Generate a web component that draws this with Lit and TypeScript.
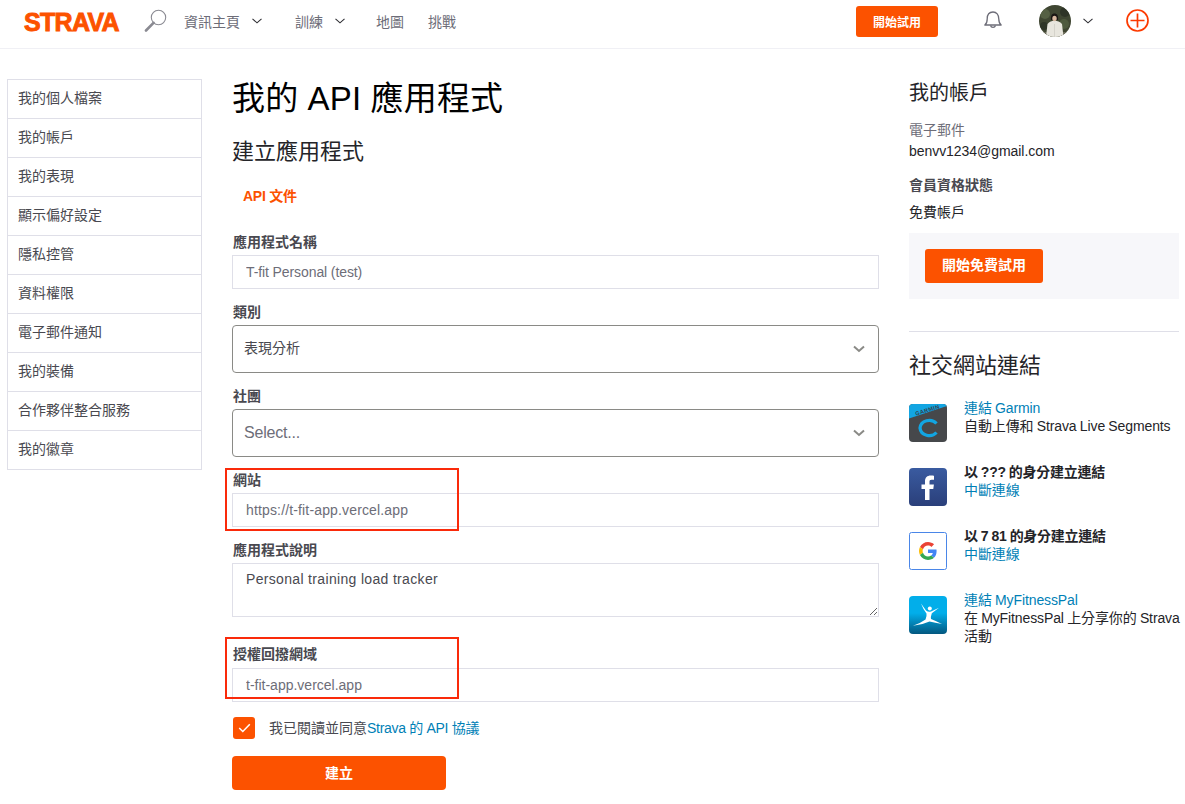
import { LitElement, html, css, svg } from 'lit';
import { customElement } from 'lit/decorators.js';

const chevron = svg`<path d="M.5 .8l4.500 4 4.500-4" fill="none" stroke="#2d2d32" stroke-width="1.100"/>`;

const menu = ['我的個人檔案', '我的帳戶', '我的表現', '顯示偏好設定', '隱私控管', '資料權限', '電子郵件通知', '我的裝備', '合作夥伴整合服務', '我的徽章'];

@customElement('app-root')
export class AppRoot extends LitElement {
  static styles = css`
    :host {
      display: block;
      width: 1185px;
      height: 804px;
      overflow: hidden;
      position: relative;
      background: #fff;
      font-family: "Liberation Sans", "Noto Sans CJK TC", sans-serif;
      font-size: 14px;
      color: #242428;
    }

    /* header */
    .top {
      display: flex;
      align-items: center;
      box-sizing: border-box;
      height: 49px;
      border-bottom: 1px solid #f0f0f5;
      padding: 0 0 7px 24px;
      color: #6d6d78;
    }
    .logo {
      width: 96px;
      font-family: "Liberation Sans", sans-serif;
      font-weight: 700;
      font-size: 25px;
      letter-spacing: -.7px;
      line-height: 20px;
      margin-top: 2px;
      color: #fc5200;
      -webkit-text-stroke: 0.9px #fc5200;
      white-space: nowrap;
    }
    .search { margin-left: 24px; }
    .nav { display: flex; align-items: center; white-space: nowrap; }
    .nav svg { margin-left: 12px; margin-top: 1px; }
    .n1 { margin-left: 17px; }
    .n2 { margin-left: 33px; }
    .n3 { margin-left: 31px; }
    .n4 { margin-left: 24px; }
    .trial {
      margin-left: 400px;
      width: 82px;
      height: 31px;
      margin-top: 2px;
      border-radius: 3px;
      background: #fc5200;
      color: #fff;
      font-size: 12px;
      font-weight: 700;
      display: flex;
      align-items: center;
      justify-content: center;
      padding-bottom: 1px;
      box-sizing: border-box;
    }
    .bell { margin-left: 46px; margin-top: -2px; }
    .avatar {
      margin-left: 37px;
      width: 32px;
      height: 32px;
      margin-top: 1px;
      display: block;
    }
    .avchev { margin-left: 12px; }
    .plus { margin-left: 33px; }

    /* page */
    .page {
      display: grid;
      grid-template-columns: 195px 647px 270px;
      column-gap: 30px;
      padding: 30px 0 0 7px;
    }

    .side { border: 1px solid #dfdfe8; border-bottom: 0; align-self: start; width: 193px; }
    .side div {
      height: 38px;
      line-height: 37px;
      padding-left: 10px;
      border-bottom: 1px solid #dfdfe8;
      color: #494950;
    }

    /* main column */
    h1 { margin: 0; font-size: 33px; font-weight: 400; line-height: 42px; color: #000; letter-spacing: .15px; }
    h2 { margin: 0; font-size: 22px; font-weight: 400; line-height: 30px; color: #242428; }
    .main h1 { margin-top: -1px; }
    .main h2 { margin-top: 17px; }
    .doc {
      margin: 19px 0 0 11px;
      color: #fc5200;
      font-weight: 700;
      line-height: 20px;
      letter-spacing: -.25px;
    }
    .lab {
      display: block;
      font-weight: 700;
      line-height: 20px;
      color: #494950;
      margin: 13px 0 3px 1px;
    }
    .main .first { margin-top: 26px; }
    .main .gapped { margin-top: 27px; margin-bottom: 4px; }
    input, textarea {
      display: block;
      box-sizing: border-box;
      width: 647px;
      margin: 0;
      font: inherit;
      color: #6d6d78;
      border: 1px solid #dfdfe8;
      border-radius: 0;
      outline: 0;
      padding: 0 13px;
      background: #fff;
    }
    input { height: 34px; }
    input.url { letter-spacing: .15px; }
    input.name { letter-spacing: -.1px; }
    textarea { height: 54px; padding: 7px 13px; color: #494950; letter-spacing: .33px; }
    .sel {
      box-sizing: border-box;
      height: 48px;
      border: 1px solid #8a8a86;
      border-radius: 4px;
      display: flex;
      align-items: center;
      justify-content: space-between;
      padding: 0 13px 0 11px;
      color: #494950;
    }
    .sel span { padding-bottom: 4px; }
    .sel.ph { font-size: 16px; color: #6d6d78; }
    .sel.ph span { padding-bottom: 0; letter-spacing: -.2px; }
    .agree { display: flex; align-items: center; margin-top: 15px; color: #494950; height: 22px; }
    .agree span { padding-bottom: 2px; }
    .box {
      width: 22px;
      height: 22px;
      margin-left: 1px;
      margin-right: 14px;
      border-radius: 3px;
      background: #fc5200;
      display: flex;
      align-items: center;
      justify-content: center;
    }
    a { color: #007fb6; text-decoration: none; }
    .agree a { letter-spacing: -.3px; }
    .create {
      margin-top: 17px;
      width: 214px;
      height: 34px;
      box-sizing: border-box;
      padding-bottom: 2px;
      border-radius: 4px;
      background: #fc5200;
      color: #fff;
      font-weight: 700;
      display: flex;
      align-items: center;
      justify-content: center;
    }

    /* right column */
    .right h3 { margin: 0; font-size: 20px; font-weight: 400; line-height: 28px; color: #242428; }
    .gray { color: #6d6d78; line-height: 20px; margin-top: 13px; }
    .line { line-height: 20px; margin-top: 1px; letter-spacing: -.05px; }
    .bold { font-weight: 700; color: #494950; line-height: 20px; margin-top: 14px; }
    .free { line-height: 20px; margin-top: 7px; }
    .panel { margin-top: 11px; background: #f7f7fa; padding: 16px; height: 66px; box-sizing: border-box; }
    .panel div {
      width: 118px;
      height: 34px;
      box-sizing: border-box;
      padding-bottom: 5px;
      border-radius: 3px;
      background: #fc5200;
      color: #fff;
      font-weight: 700;
      display: flex;
      align-items: center;
      justify-content: center;
    }
    hr { border: 0; border-top: 1px solid #dfdfe8; margin: 32px 0 0; }
    .right h2 { margin-top: 19px; }
    .socials { display: flex; flex-direction: column; gap: 28px; margin-top: 21px; }
    .soc { display: flex; gap: 17px; line-height: 18px; height: 36px; }
    .soc svg { flex: none; margin-top: 2px; }
    .soc b { color: #242428; letter-spacing: -.27px; }
    .soc .txt { margin-top: -3px; white-space: nowrap; word-spacing: -.5px; letter-spacing: -.11px; }

    /* annotation boxes */
    .mark {
      position: absolute;
      left: 225px;
      width: 230px;
      border: 2px solid #fa2a0a;
      pointer-events: none;
    }
    .m1 { top: 468px; height: 59px; }
    .m2 { top: 637px; height: 58px; }
  `;

  render() {
    return html`
      <div class="top">
        <div class="logo">STRAVA</div>
        <svg class="search" width="23" height="23" viewBox="0 0 23 23" fill="none">
          <circle cx="14.500" cy="8.500" r="7.200" stroke="#8a8a92" stroke-width="1.100"/>
          <path d="M9.500 13.800 2 21.500" stroke="#8a8a92" stroke-width="2.600" stroke-linecap="round"/>
        </svg>
        <div class="nav n1">資訊主頁<svg width="10" height="6" viewBox="0 0 10 6">${chevron}</svg></div>
        <div class="nav n2">訓練<svg width="10" height="6" viewBox="0 0 10 6">${chevron}</svg></div>
        <div class="nav n3">地圖</div>
        <div class="nav n4">挑戰</div>
        <div class="trial">開始試用</div>
        <svg class="bell" width="18" height="18" viewBox="0 0 18 18" fill="none" stroke="#6d6d78" stroke-width="1.300">
          <path d="M.8 14c1.800-1.200 2.400-2.600 2.400-6C3.200 3.600 5.500 1 9 1s5.800 2.600 5.800 7c0 3.400.6 4.800 2.400 6z" stroke-linejoin="round"/>
          <path d="M6.500 14.500a2.600 2.600 0 0 0 5 0"/>
        </svg>
        <svg class="avatar" viewBox="0 0 32 32">
          <defs><clipPath id="av"><circle cx="16" cy="16" r="16"/></clipPath></defs>
          <g clip-path="url(#av)">
            <rect width="32" height="32" fill="#3f4632"/>
            <circle cx="6" cy="9" r="5" fill="#556044"/>
            <circle cx="26" cy="7" r="5" fill="#2e3427"/>
            <circle cx="25" cy="19" r="5" fill="#4e5a3e"/>
            <circle cx="5" cy="21" r="4" fill="#2f3628"/>
            <rect y="27" width="32" height="5" fill="#6a6a58"/>
            <path d="M7 32l1.500-13c2-2.500 4-3 7-3s5.500.5 7.500 3L24.500 32z" fill="#e8e6de"/>
            <path d="M15.500 19v13" stroke="#c8c6be" stroke-width=".6"/>
            <path d="M12 15c-.5-4.500 1-6.500 3.500-6.500s4 2 3.500 6.500z" fill="#1a1614"/>
            <ellipse cx="15.500" cy="13.500" rx="2.200" ry="2.800" fill="#d8b8a0"/>
          </g>
        </svg>
        <svg class="avchev" width="10" height="6" viewBox="0 0 10 6">${chevron}</svg>
        <svg class="plus" width="23" height="23" viewBox="0 0 23 23" fill="none" stroke="#fc3a00" stroke-width="1.700">
          <circle cx="11.500" cy="11.500" r="10.500"/>
          <path d="M4.500 11.500h14M11.500 4.500v14"/>
        </svg>
      </div>

      <div class="page">
        <div class="side">${menu.map((m) => html`<div>${m}</div>`)}</div>

        <div class="main">
          <h1>我的 API 應用程式</h1>
          <h2>建立應用程式</h2>
          <div class="doc">API 文件</div>

          <div class="lab first">應用程式名稱</div>
          <input class="name" value="T-fit Personal (test)" />

          <div class="lab">類別</div>
          <div class="sel"><span>表現分析</span>${this.selArrow()}</div>

          <div class="lab">社團</div>
          <div class="sel ph"><span>Select...</span>${this.selArrow()}</div>

          <div class="lab">網站</div>
          <input class="url" value="https://t-fit-app.vercel.app" />

          <div class="lab">應用程式說明</div>
          <textarea>Personal training load tracker</textarea>

          <div class="lab gapped">授權回撥網域</div>
          <input value="t-fit-app.vercel.app" />

          <div class="agree">
            <div class="box">
              <svg width="13" height="10" viewBox="0 0 13 10" fill="none"><path d="M1.200 5l3.600 3.500L11.800 1.200" stroke="#fff" stroke-width="1.500"/></svg>
            </div>
            <span>我已閱讀並同意<a>Strava 的 API 協議</a></span>
          </div>
          <div class="create">建立</div>
        </div>

        <div class="right">
          <h3>我的帳戶</h3>
          <div class="gray">電子郵件</div>
          <div class="line">benvv1234@gmail.com</div>
          <div class="bold">會員資格狀態</div>
          <div class="free">免費帳戶</div>
          <div class="panel"><div>開始免費試用</div></div>
          <hr />
          <h2>社交網站連結</h2>
          <div class="socials">
            <div class="soc">
              ${this.garmin()}
              <div class="txt"><a>連結 Garmin</a><br />自動上傳和 Strava Live Segments</div>
            </div>
            <div class="soc">
              ${this.facebook()}
              <div class="txt"><b>以 ??? 的身分建立連結</b><br /><a>中斷連線</a></div>
            </div>
            <div class="soc">
              ${this.google()}
              <div class="txt"><b>以 7 81 的身分建立連結</b><br /><a>中斷連線</a></div>
            </div>
            <div class="soc">
              ${this.mfp()}
              <div class="txt"><a>連結 MyFitnessPal</a><br />在 MyFitnessPal 上分享你的 Strava<br />活動</div>
            </div>
          </div>
        </div>
      </div>

      <div class="mark m1"></div>
      <div class="mark m2"></div>
    `;
  }

  selArrow() {
    return html`<svg width="12" height="8" viewBox="0 0 12 8" fill="none"><path d="M1 1.500l5 4.500 5-4.500" stroke="#8a8a86" stroke-width="2"/></svg>`;
  }

  garmin() {
    return html`<svg width="38" height="38" viewBox="0 0 38 38">
      <defs><clipPath id="g"><rect width="38" height="38" rx="4"/></clipPath></defs>
      <g clip-path="url(#g)">
        <rect width="38" height="38" fill="#46484b"/>
        <path d="M0 0h38v2L0 14.500z" fill="#12a5e2"/>
        <text x="7" y="11.800" font-size="5.600" font-weight="700" letter-spacing=".4" fill="#33414d" transform="rotate(-18 7 11.800)" font-family="Liberation Sans">GARMIN</text>
        <path d="M27.500 19.500A9.300 8.300 0 0 0 11 24a9.300 8.300 0 0 0 16.500 4.500" fill="none" stroke="#12a5e2" stroke-width="3.200"/>
      </g>
    </svg>`;
  }

  facebook() {
    return html`<svg width="38" height="38" viewBox="0 0 38 38">
      <defs><linearGradient id="f" x1="0" y1="0" x2="0" y2="1"><stop offset="0" stop-color="#3a5ba0"/><stop offset="1" stop-color="#2a3f7a"/></linearGradient></defs>
      <rect width="38" height="38" rx="4" fill="url(#f)"/>
      <path d="M16 32V21h-3.500v-4.500H16v-3c0-4 2.200-6 5.800-6 1.500 0 2.700.1 3.200.2v4h-2.300c-1.900 0-2.200.9-2.200 2.200v2.600h4.400l-.6 4.500h-3.800v11z" fill="#fff"/>
    </svg>`;
  }

  google() {
    return html`<svg width="38" height="38" viewBox="0 0 38 38">
      <rect x=".5" y=".5" width="37" height="37" rx="2" fill="#fff" stroke="#4a86e8"/>
      <g transform="translate(10 10) scale(.375)" >
        <path fill="#ea4335" d="M24 9.500c3.500 0 6.700 1.200 9.200 3.600l6.900-6.900C35.900 2.400 30.500 0 24 0 14.600 0 6.500 5.400 2.600 13.200l8 6.200C12.500 13.700 17.800 9.500 24 9.500z"/>
        <path fill="#4285f4" d="M46.900 24.500c0-1.600-.1-3.100-.4-4.500H24v9h12.900c-.6 3-2.200 5.500-4.700 7.200l7.700 6c4.500-4.200 7-10.300 7-17.700z"/>
        <path fill="#fbbc05" d="M10.500 28.600c-.5-1.400-.8-3-.8-4.600s.3-3.200.8-4.600l-8-6.200C.9 16.500 0 20.100 0 24s.9 7.500 2.600 10.800z"/>
        <path fill="#34a853" d="M24 48c6.500 0 11.900-2.100 15.900-5.800l-7.700-6c-2.200 1.400-4.900 2.300-8.200 2.300-6.200 0-11.500-4.200-13.400-9.900l-8 6.200C6.500 42.600 14.600 48 24 48z"/>
      </g>
    </svg>`;
  }

  mfp() {
    return html`<svg width="38" height="38" viewBox="0 0 38 38">
      <defs><linearGradient id="m" x1="0" y1="0" x2="0" y2="1"><stop offset=".45" stop-color="#02aeea"/><stop offset="1" stop-color="#03577f"/></linearGradient></defs>
      <rect width="38" height="38" rx="4" fill="url(#m)"/>
      <circle cx="20.800" cy="12.600" r="2" fill="#fff"/>
      <path d="M12 7.500l5 7q2.500 2 5 1l8-3.700-7.200 5.400q-1.300 3.800-.8 5.800 5 2 11 5-7-1.500-12.500-2.500-7.500 3.500-16.500 4.200 7-2.200 12.500-6.200 1.500-3.500 1-6-3.500-4.500-5.500-10z" fill="#fff"/>
    </svg>`;
  }
}
